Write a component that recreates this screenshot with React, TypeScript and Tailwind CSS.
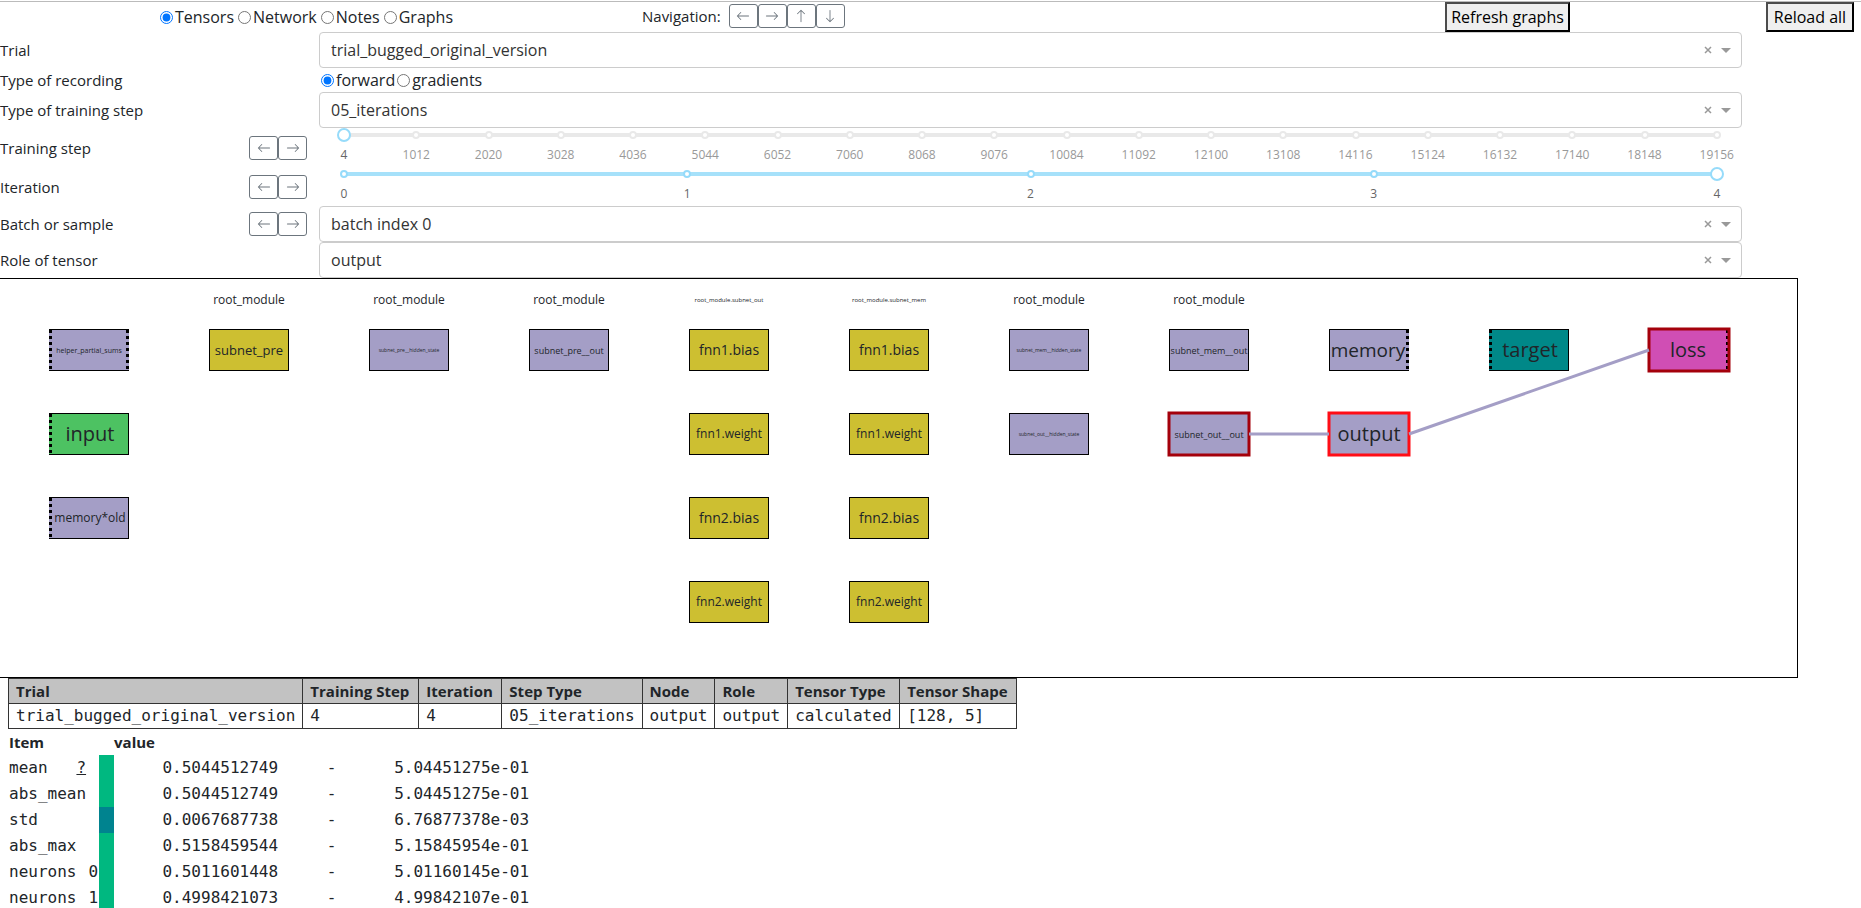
import { useState } from "react";
import type { ReactNode } from "react";
import { BsArrowDown, BsArrowLeft, BsArrowRight, BsArrowUp } from "react-icons/bs";

function ArrowButton({ label, children }: { label: string; children: ReactNode }) {
  return (
    <button
      type="button"
      aria-label={label}
      className="flex h-6 w-[29px] items-center justify-center rounded-[3px] border border-[#6c757d] text-[#6c757d]"
    >
      {children}
    </button>
  );
}

function StepButtons({ subject }: { subject: string }) {
  return (
    <div className="flex">
      <ArrowButton label={`Previous ${subject}`}>
        <BsArrowLeft size={14} />
      </ArrowButton>
      <ArrowButton label={`Next ${subject}`}>
        <BsArrowRight size={14} />
      </ArrowButton>
    </div>
  );
}

function Radios({
  name,
  options,
  className,
}: {
  name: string;
  options: string[];
  className: string;
}) {
  const [value, setValue] = useState(options[0]);
  return (
    <div className={className}>
      {options.map((option) => (
        <label key={option} className="flex items-center gap-0.5">
          <input
            type="radio"
            name={name}
            checked={value === option}
            onChange={() => setValue(option)}
            className="m-0 size-[13px] accent-[#0075ff]"
          />
          {option}
        </label>
      ))}
    </div>
  );
}

function Dropdown({ id, value }: { id: string; value: string }) {
  return (
    <div className="relative">
      <select
        id={id}
        defaultValue={value}
        className="block h-9 w-full appearance-none rounded border border-[#ccc] bg-white pr-16 pl-[11px] text-base text-[#333]"
      >
        <option>{value}</option>
      </select>
      <button
        type="button"
        aria-label="Clear"
        className="absolute inset-y-0 right-7 flex w-3 items-center justify-center text-[#999]"
      >
        <svg viewBox="0 0 8 8" className="size-2" stroke="currentColor" strokeWidth="1.5">
          <path d="M1 1 7 7M7 1 1 7" />
        </svg>
      </button>
      <svg
        viewBox="0 0 10 5"
        className="pointer-events-none absolute top-4 right-[11px] h-[5px] w-2.5"
        fill="#999"
      >
        <path d="M0 0H10L5 5Z" />
      </svg>
    </div>
  );
}

function Slider({
  id,
  marks,
  initial,
}: {
  id: string;
  marks: number[];
  initial: number;
}) {
  const [value, setValue] = useState(initial);
  const min = marks[0];
  const max = marks[marks.length - 1];
  const percent = ((value - min) / (max - min)) * 100;
  return (
    <div className="h-[39px] px-[25px]">
      <div className="relative h-3.5">
        <div className="absolute inset-x-0 top-[5px] h-1 rounded-full bg-[#e9e9e9]">
          <div className="h-1 rounded-full bg-[#a6e1fa]" style={{ width: `${percent}%` }} />
        </div>
        <div className="absolute inset-0 flex items-center justify-between">
          {marks.map((mark) => (
            <span key={mark} className="flex w-0 justify-center">
              <span
                className={`size-2 shrink-0 rounded-full border-2 bg-white ${
                  mark <= value ? "border-[#96dbfa]" : "border-[#e9e9e9]"
                }`}
              />
            </span>
          ))}
        </div>
        <input
          id={id}
          type="range"
          min={min}
          max={max}
          value={value}
          onChange={(event) => setValue(Number(event.target.value))}
          className="absolute inset-y-0 -left-[7px] m-0 h-3.5 w-[calc(100%+14px)] appearance-none bg-transparent [&::-moz-range-thumb]:size-3.5 [&::-moz-range-thumb]:rounded-full [&::-moz-range-thumb]:border-2 [&::-moz-range-thumb]:border-[#96dbfa] [&::-moz-range-thumb]:bg-white [&::-webkit-slider-thumb]:size-3.5 [&::-webkit-slider-thumb]:appearance-none [&::-webkit-slider-thumb]:rounded-full [&::-webkit-slider-thumb]:border-2 [&::-webkit-slider-thumb]:border-[#96dbfa] [&::-webkit-slider-thumb]:bg-white"
        />
      </div>
      <div className="mt-1 flex justify-between text-xs leading-[18px]">
        {marks.map((mark) => (
          <span
            key={mark}
            className={`flex w-0 justify-center ${mark <= value ? "text-[#666]" : "text-[#999]"}`}
          >
            {mark}
          </span>
        ))}
      </div>
    </div>
  );
}

function Row({
  label,
  htmlFor,
  steps,
  children,
}: {
  label: string;
  htmlFor?: string;
  steps?: string;
  children: ReactNode;
}) {
  return (
    <div className="grid grid-cols-[249px_70px_1fr] items-center">
      <label htmlFor={htmlFor} className="text-[15px]">
        {label}
      </label>
      <div>{steps && <StepButtons subject={steps} />}</div>
      {children}
    </div>
  );
}

type Kind = "calculated" | "parameter" | "input" | "target" | "loss";

const fills: Record<Kind, string> = {
  calculated: "bg-[#a49ec6]",
  parameter: "bg-[#cdbf31]",
  input: "bg-[#4dc262]",
  target: "bg-[#008888]",
  loss: "bg-[#d04eb4]",
};

interface GraphNode {
  name: string;
  col: number;
  row: number;
  kind: Kind;
  text: string;
  left?: boolean;
  right?: boolean;
}

const nodes: GraphNode[] = [
  { name: "helper_partial_sums", col: 0, row: 0, kind: "calculated", text: "text-[7px]", left: true, right: true },
  { name: "input", col: 0, row: 1, kind: "input", text: "text-[20px]", left: true },
  { name: "memory*old", col: 0, row: 2, kind: "calculated", text: "text-[12px]", left: true },
  { name: "subnet_pre", col: 1, row: 0, kind: "parameter", text: "text-[13px]" },
  { name: "subnet_pre__hidden_state", col: 2, row: 0, kind: "calculated", text: "text-[5px]" },
  { name: "subnet_pre__out", col: 3, row: 0, kind: "calculated", text: "text-[9px]" },
  { name: "fnn1.bias", col: 4, row: 0, kind: "parameter", text: "text-[14px]" },
  { name: "fnn1.weight", col: 4, row: 1, kind: "parameter", text: "text-[12px]" },
  { name: "fnn2.bias", col: 4, row: 2, kind: "parameter", text: "text-[14px]" },
  { name: "fnn2.weight", col: 4, row: 3, kind: "parameter", text: "text-[12px]" },
  { name: "fnn1.bias", col: 5, row: 0, kind: "parameter", text: "text-[14px]" },
  { name: "fnn1.weight", col: 5, row: 1, kind: "parameter", text: "text-[12px]" },
  { name: "fnn2.bias", col: 5, row: 2, kind: "parameter", text: "text-[14px]" },
  { name: "fnn2.weight", col: 5, row: 3, kind: "parameter", text: "text-[12px]" },
  { name: "subnet_mem__hidden_state", col: 6, row: 0, kind: "calculated", text: "text-[5px]" },
  { name: "subnet_out__hidden_state", col: 6, row: 1, kind: "calculated", text: "text-[5px]" },
  { name: "subnet_mem__out", col: 7, row: 0, kind: "calculated", text: "text-[9px]" },
  { name: "subnet_out__out", col: 7, row: 1, kind: "calculated", text: "text-[9px]" },
  { name: "memory", col: 8, row: 0, kind: "calculated", text: "text-[19px]", right: true },
  { name: "output", col: 8, row: 1, kind: "calculated", text: "text-[20px]" },
  { name: "target", col: 9, row: 0, kind: "target", text: "text-[20px]", left: true },
  { name: "loss", col: 10, row: 0, kind: "loss", text: "text-[20px]", right: true },
];

const modules = [
  { col: 1, name: "root_module", text: "text-[12px]" },
  { col: 2, name: "root_module", text: "text-[12px]" },
  { col: 3, name: "root_module", text: "text-[12px]" },
  { col: 4, name: "root_module.subnet_out", text: "text-[6px]" },
  { col: 5, name: "root_module.subnet_mem", text: "text-[6px]" },
  { col: 6, name: "root_module", text: "text-[12px]" },
  { col: 7, name: "root_module", text: "text-[12px]" },
];

const nodeX = (col: number) => 49 + col * 160;
const nodeY = (row: number) => 50 + row * 84;

const outlines = [
  { col: 7, row: 1, color: "#a4000b" },
  { col: 8, row: 1, color: "#ff0d16" },
  { col: 10, row: 0, color: "#a4000b" },
];

function Dashes() {
  return (
    <span className="w-[3px] shrink-0 self-stretch bg-[repeating-linear-gradient(to_bottom,#000_0_3px,transparent_3px_6px)]" />
  );
}

function Graph() {
  return (
    <div className="relative mr-[63px] h-[400px] overflow-hidden border-y border-r border-black">
      {modules.map((module) => (
        <div
          key={module.col}
          className={`absolute top-[11px] flex h-5 w-20 items-center justify-center ${module.text}`}
          style={{ left: nodeX(module.col) }}
        >
          {module.name}
        </div>
      ))}
      {nodes.map((node) => (
        <button
          key={`${node.col}-${node.row}`}
          type="button"
          className={`absolute flex h-[42px] w-20 items-center border-y border-black leading-none ${
            node.left ? "" : "border-l"
          } ${node.right ? "" : "border-r"} ${fills[node.kind]} ${node.text}`}
          style={{ left: nodeX(node.col), top: nodeY(node.row) }}
        >
          {node.left && <Dashes />}
          <span className="flex min-w-0 flex-1 justify-center">{node.name}</span>
          {node.right && <Dashes />}
        </button>
      ))}
      <svg className="pointer-events-none absolute inset-0 size-full" fill="none" strokeWidth="3">
        {outlines.map((o) => (
          <rect
            key={`${o.col}-${o.row}`}
            x={nodeX(o.col)}
            y={nodeY(o.row)}
            width="80"
            height="42"
            stroke={o.color}
          />
        ))}
        <path d="M1249 155H1329M1409 155 1649 71" stroke="#a49ec6" />
      </svg>
    </div>
  );
}

const summary = [
  { head: "Trial", value: "trial_bugged_original_version", width: "w-[294px]" },
  { head: "Training Step", value: "4", width: "w-[116px]" },
  { head: "Iteration", value: "4", width: "w-[83px]" },
  { head: "Step Type", value: "05_iterations", width: "w-[140px]" },
  { head: "Node", value: "output", width: "w-[72px]" },
  { head: "Role", value: "output", width: "w-[72px]" },
  { head: "Tensor Type", value: "calculated", width: "w-[112px]" },
  { head: "Tensor Shape", value: "[128, 5]", width: "w-[117px]" },
];

const stats = [
  { item: "mean", help: true, index: "", value: "0.5044512749", sci: "5.04451275e-01", color: "bg-[#00b880]" },
  { item: "abs_mean", index: "", value: "0.5044512749", sci: "5.04451275e-01", color: "bg-[#00b880]" },
  { item: "std", index: "", value: "0.0067687738", sci: "6.76877378e-03", color: "bg-[#00838f]" },
  { item: "abs_max", index: "", value: "0.5158459544", sci: "5.15845954e-01", color: "bg-[#00b880]" },
  { item: "neurons", index: "0", value: "0.5011601448", sci: "5.01160145e-01", color: "bg-[#00b880]" },
  { item: "neurons", index: "1", value: "0.4998421073", sci: "4.99842107e-01", color: "bg-[#00b880]" },
];

const range = (start: number, step: number, count: number) =>
  Array.from({ length: count }, (_, i) => start + i * step);

export default function App() {
  return (
    <div className="h-screen overflow-hidden bg-white pt-px font-['Open_Sans',sans-serif] text-base leading-6 text-[#212529]">
      <header className="grid h-[31px] grid-cols-[642fr_803fr_416fr] items-center border-t border-[#bbb]">
        <Radios
          name="view"
          options={["Tensors", "Network", "Notes", "Graphs"]}
          className="flex gap-1 pl-40"
        />
        <div className="flex items-center gap-2 pb-0.5 text-[15px]">
          Navigation:
          <div className="flex">
            <ArrowButton label="Left">
              <BsArrowLeft size={14} />
            </ArrowButton>
            <ArrowButton label="Right">
              <BsArrowRight size={14} />
            </ArrowButton>
            <ArrowButton label="Up">
              <BsArrowUp size={14} />
            </ArrowButton>
            <ArrowButton label="Down">
              <BsArrowDown size={14} />
            </ArrowButton>
          </div>
        </div>
        <div className="flex justify-between pr-[7px] text-base text-black">
          <button
            type="button"
            className="h-[30px] w-[125px] border-2 border-t-[#4c4c4c] border-r-black border-b-black border-l-[#4c4c4c] bg-[#efefef] whitespace-nowrap"
          >
            Refresh graphs
          </button>
          <button
            type="button"
            className="h-[30px] w-[88px] border-2 border-t-[#4c4c4c] border-r-black border-b-black border-l-[#4c4c4c] bg-[#efefef] whitespace-nowrap"
          >
            Reload all
          </button>
        </div>
      </header>

      <section className="mr-[119px]">
        <Row label="Trial" htmlFor="trial">
          <Dropdown id="trial" value="trial_bugged_original_version" />
        </Row>
        <Row label="Type of recording">
          <Radios name="recording" options={["forward", "gradients"]} className="flex gap-0.5 pl-0.5" />
        </Row>
        <Row label="Type of training step" htmlFor="step-type">
          <Dropdown id="step-type" value="05_iterations" />
        </Row>
        <Row label="Training step" htmlFor="training-step" steps="training step">
          <Slider id="training-step" marks={range(4, 1008, 20)} initial={4} />
        </Row>
        <Row label="Iteration" htmlFor="iteration" steps="iteration">
          <Slider id="iteration" marks={range(0, 1, 5)} initial={4} />
        </Row>
        <Row label="Batch or sample" htmlFor="batch" steps="batch">
          <Dropdown id="batch" value="batch index 0" />
        </Row>
        <Row label="Role of tensor" htmlFor="role">
          <Dropdown id="role" value="output" />
        </Row>
      </section>

      <Graph />

      <section className="pl-2 font-['DejaVu_Sans_Mono',monospace]">
        <table className="table-fixed border-collapse">
          <thead>
            <tr className="h-[25px] bg-[#c2c2c2] font-['Open_Sans',sans-serif] text-[15px]">
              {summary.map((column) => (
                <th
                  key={column.head}
                  className={`border border-[#333] px-[7px] py-0 text-left leading-6 font-bold whitespace-nowrap ${column.width}`}
                >
                  {column.head}
                </th>
              ))}
            </tr>
          </thead>
          <tbody>
            <tr>
              {summary.map((column) => (
                <td key={column.head} className="border border-[#333] px-[7px] py-0 whitespace-nowrap">
                  {column.value}
                </td>
              ))}
            </tr>
          </tbody>
        </table>

        <table className="ml-px">
          <thead>
            <tr className="h-[26px] text-left font-['Open_Sans',sans-serif] text-[15px]">
              <th colSpan={3} className="p-0 font-bold">
                Item
              </th>
              <th colSpan={3} className="p-0 font-bold">
                value
              </th>
            </tr>
          </thead>
          <tbody>
            {stats.map((stat) => (
              <tr key={stat.item + stat.index} className="h-[26px]">
                <td className="w-[77px] p-0">
                  <div className="flex justify-between">
                    {stat.item}
                    {stat.help && (
                      <a href="#help" className="underline">
                        ?
                      </a>
                    )}
                  </div>
                </td>
                <td className="w-[13px] p-0 pr-px text-right">{stat.index}</td>
                <td className={`w-[15px] p-0 ${stat.color}`} />
                <td className="w-[164px] p-0 text-right">{stat.value}</td>
                <td className="w-[107px] p-0 text-center">-</td>
                <td className="w-[144px] p-0 text-right">{stat.sci}</td>
              </tr>
            ))}
          </tbody>
        </table>
      </section>
    </div>
  );
}
